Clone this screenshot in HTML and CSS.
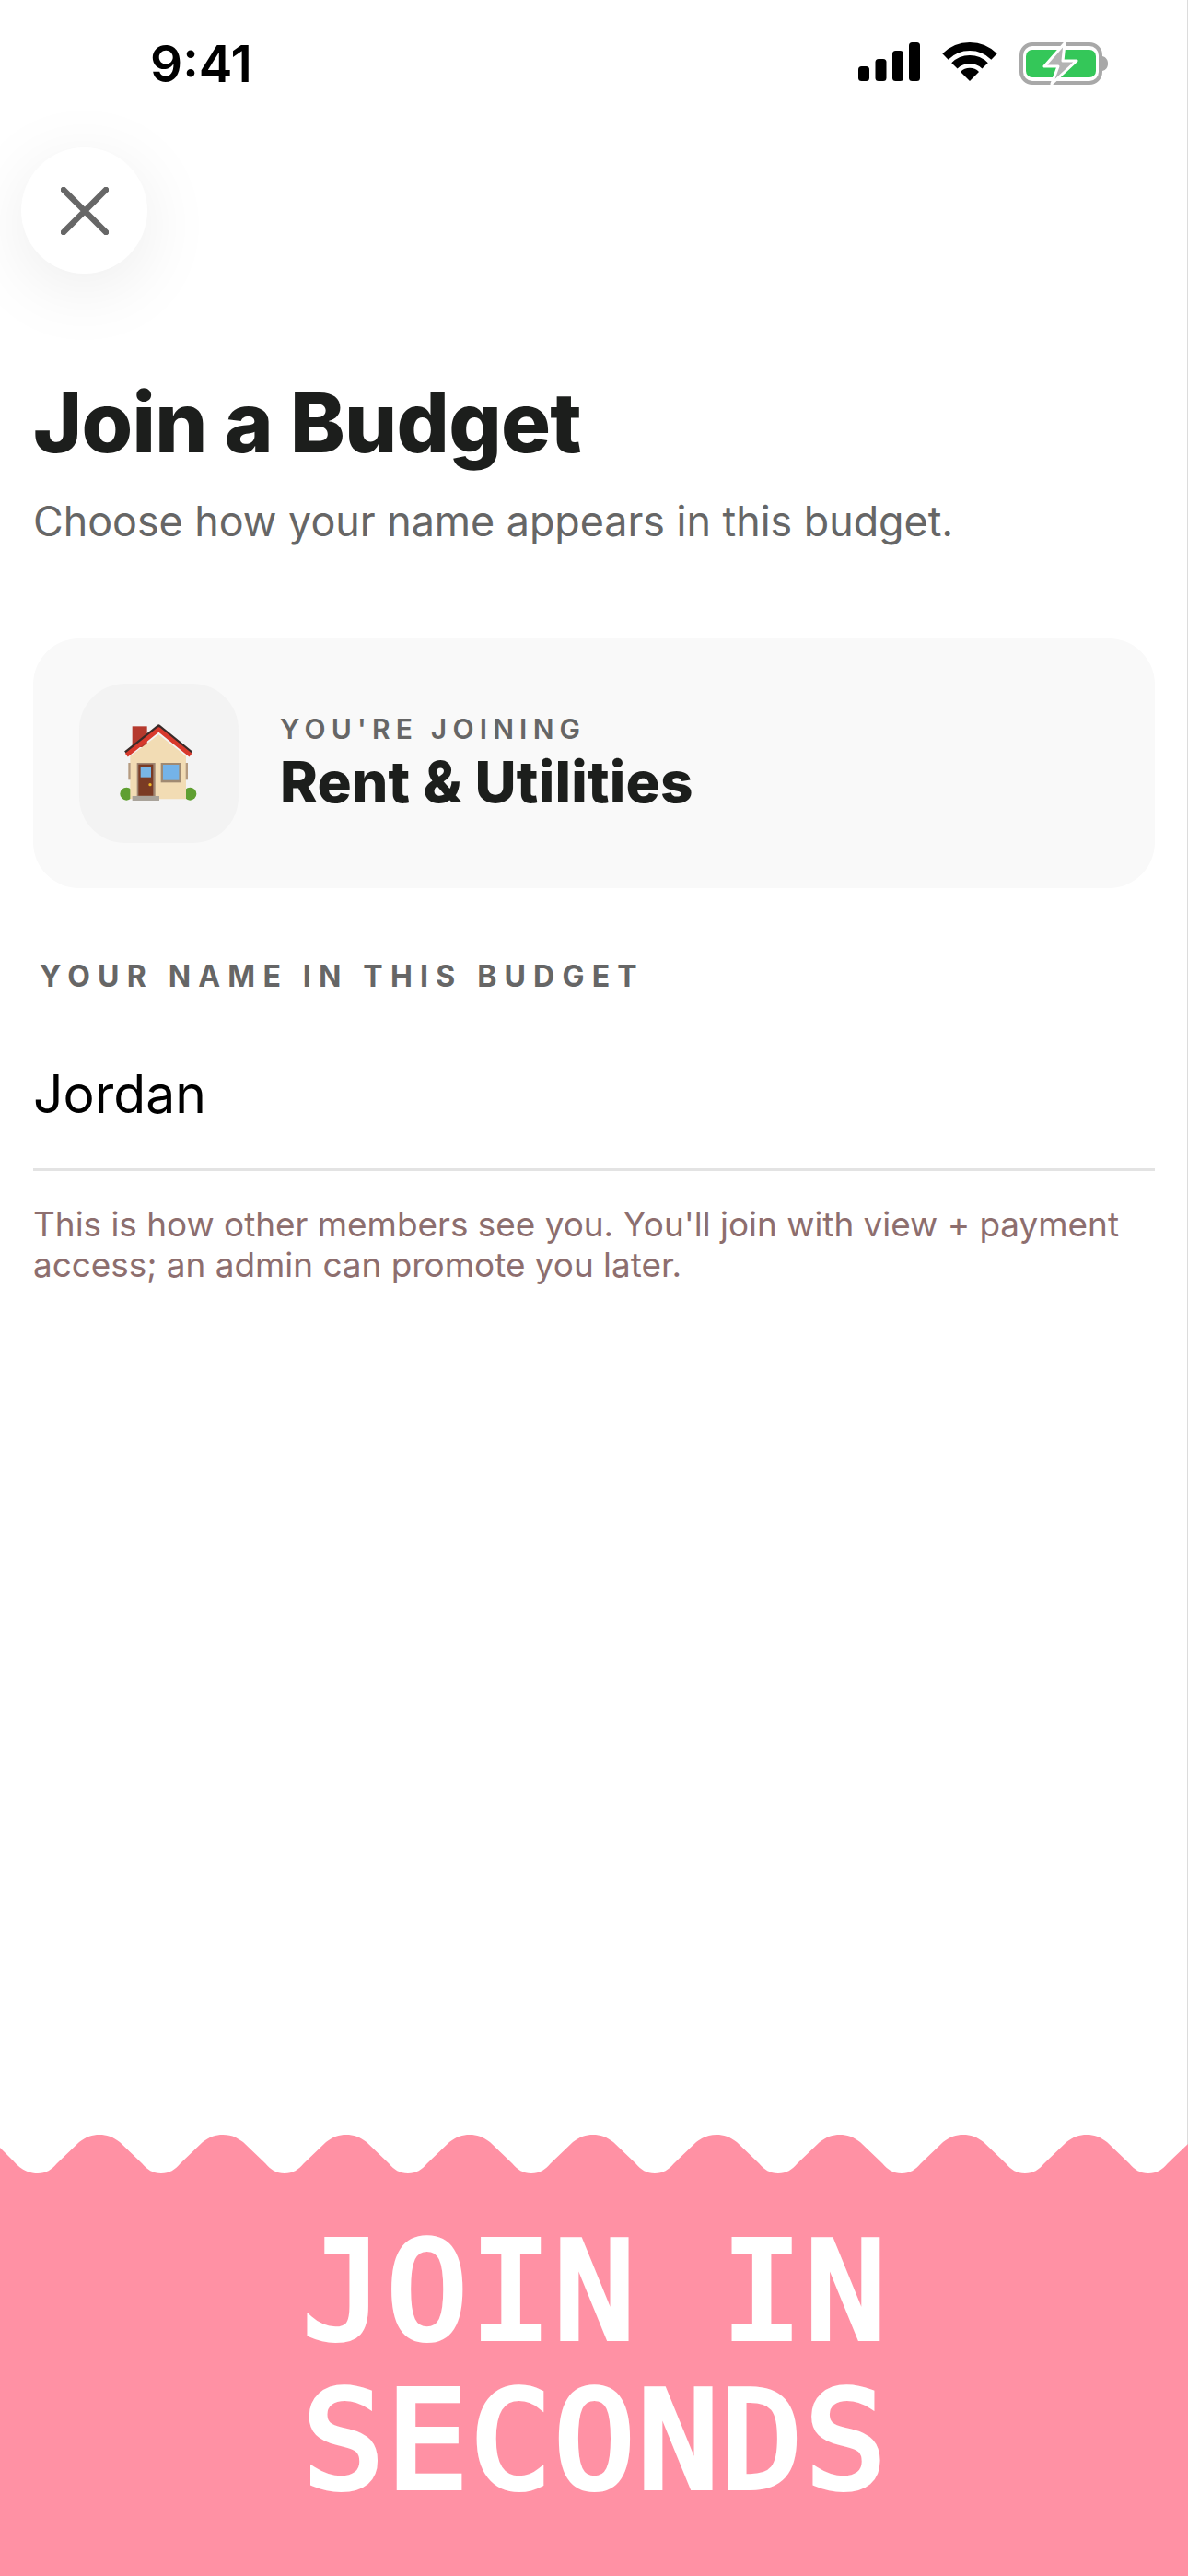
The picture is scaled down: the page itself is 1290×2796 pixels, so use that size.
FILE: index.html
```html
<!DOCTYPE html>
<html lang="en">
<head>
    <meta charset="UTF-8">
    <meta name="viewport" content="width=device-width, initial-scale=1.0">
    <title>Join a Budget</title>
    <link rel="stylesheet" href="styles.css">
</head>
<body>
    <div class="screen">
        <div class="statusBar">
            <span class="time">9:41</span>
            <div class="statusIcons">
                <svg class="signal" width="67" height="42" viewBox="0 0 67 42">
                    <rect x="0" y="26" width="12" height="16" rx="3.5"/>
                    <rect x="18.5" y="18" width="12" height="24" rx="3.5"/>
                    <rect x="37" y="9" width="12" height="33" rx="3.5"/>
                    <rect x="55" y="0" width="12" height="42" rx="3.5"/>
                </svg>
                <svg class="wifi" width="60" height="42" viewBox="0 0 60 42">
                    <path d="M3.5 15.5A37.5 37.5 0 0 1 56.5 15.5" fill="none" stroke="#000" stroke-width="9"/>
                    <path d="M13.4 25.4A23.5 23.5 0 0 1 46.6 25.4" fill="none" stroke="#000" stroke-width="9"/>
                    <path d="M30 42L20 32A14 14 0 0 1 40 32Z"/>
                </svg>
                <svg class="battery" width="96" height="46" viewBox="0 0 96 46">
                    <rect x="2" y="2" width="86" height="42" rx="12" fill="none" stroke="#a8a8a8" stroke-width="4"/>
                    <rect x="7" y="8" width="76" height="30" rx="7" fill="#34c759"/>
                    <path d="M90 15C94 16 96 19 96 23C96 27 94 30 90 31Z" fill="#a8a8a8"/>
                    <path d="M49 1L27 26H42L35 45L62 20H47Z" fill="#b3b3b3" stroke="#fff" stroke-width="3" stroke-linejoin="round"/>
                </svg>
            </div>
        </div>

        <button class="closeButton" aria-label="Close">
            <svg width="52" height="52" viewBox="0 0 52 52">
                <path d="M3 3L49 49M49 3L3 49" stroke="#666" stroke-width="6.5" stroke-linecap="round"/>
            </svg>
        </button>

        <div class="content">
            <h1 class="title">Join a Budget</h1>
            <p class="subtitle">Choose how your name appears in this budget.</p>

            <div class="budgetCard">
                <div class="budgetIcon">
                    <svg width="90" height="90" viewBox="110 105 270 270">
                        <rect x="157" y="118" width="48" height="68" fill="#b5392d"/>
                        <circle cx="138" cy="338" r="21" fill="#5f9f31"/>
                        <circle cx="345" cy="338" r="21" fill="#5f9f31"/>
                        <path d="M150 215L243 145L332 215V355H150Z" fill="#f2dcb4"/>
                        <rect x="144" y="237" width="7" height="55" fill="#b59b80"/>
                        <rect x="331" y="237" width="7" height="55" fill="#b59b80"/>
                        <path d="M135 204L243 118L349 204" fill="none" stroke="#3a2a28" stroke-width="12" stroke-linejoin="round"/>
                        <path d="M138 212L243 128L347 212" fill="none" stroke="#d8392c" stroke-width="14" stroke-linejoin="round"/>
                        <rect x="172" y="237" width="60" height="108" fill="#a08672"/>
                        <rect x="177" y="242" width="48" height="102" fill="#7a3b24"/>
                        <rect x="184" y="250" width="34" height="34" fill="#79b6e6"/>
                        <circle cx="215" cy="308" r="5" fill="#f0b928"/>
                        <rect x="250" y="237" width="66" height="64" fill="#a08a72"/>
                        <rect x="257" y="243" width="52" height="50" fill="#74b3e8"/>
                        <rect x="157" y="345" width="88" height="15" fill="#a9a39a"/>
                    </svg>
                </div>
                <div class="budgetText">
                    <div class="budgetLabel">YOU'RE JOINING</div>
                    <div class="budgetName">Rent &amp; Utilities</div>
                </div>
            </div>

            <div class="fieldLabel">YOUR NAME IN THIS BUDGET</div>
            <div class="nameInput">Jordan</div>
            <p class="helpText">This is how other members see you. You'll join with view + payment access; an admin can promote you later.</p>
        </div>

        <div class="banner">
            <svg class="wave" width="1290" height="44" viewBox="0 0 1290 44" preserveAspectRatio="none">
                <path fill="#ff91a4" d="M0 14 L14 28 C24 40 34 42 41 42 C50 42 56 38 62 31 L86 8 C94 2 100 0 108 0 C116 0 122 2 130 8 L154 31 C160 38 166 42 175 42 C184 42 190 38 196 31 L220 8 C228 2 234 0 242 0 C250 0 256 2 264 8 L288 31 C294 38 300 42 309 42 C318 42 324 38 330 31 L354 8 C362 2 368 0 376 0 C384 0 390 2 398 8 L422 31 C428 38 434 42 443 42 C452 42 458 38 464 31 L488 8 C496 2 502 0 510 0 C518 0 524 2 532 8 L556 31 C562 38 568 42 577 42 C586 42 592 38 598 31 L622 8 C630 2 636 0 644 0 C652 0 658 2 666 8 L690 31 C696 38 702 42 711 42 C720 42 726 38 732 31 L756 8 C764 2 770 0 778 0 C786 0 792 2 800 8 L824 31 C830 38 836 42 845 42 C854 42 860 38 866 31 L890 8 C898 2 904 0 912 0 C920 0 926 2 934 8 L958 31 C964 38 970 42 979 42 C988 42 994 38 1000 31 L1024 8 C1032 2 1038 0 1046 0 C1054 0 1060 2 1068 8 L1092 31 C1098 38 1104 42 1113 42 C1122 42 1128 38 1134 31 L1158 8 C1166 2 1172 0 1180 0 C1188 0 1194 2 1202 8 L1226 31 C1232 38 1238 42 1247 42 C1256 42 1262 38 1268 31 L1290 10 V44 H0Z"/>
            </svg>
            <div class="bannerBody">
                <div class="bannerText">JOIN IN<br>SECONDS</div>
            </div>
        </div>
    </div>
</body>
</html>
```

FILE: styles.css
```css
* {
    box-sizing: border-box;
}
html, body {
    margin: 0;
    padding: 0;
}
body {
    font-family: 'Inter', 'Liberation Sans', sans-serif;
    background: #ffffff;
    color: #1c1e1c;
}
.screen {
    width: 1290px;
    height: 2796px;
    display: flex;
    flex-direction: column;
    border-right: 1px solid #dcdcdc;
}
.statusBar {
    height: 160px;
    display: flex;
    justify-content: space-between;
    align-items: flex-start;
    padding: 36px 86px 0 163px;
}
.time {
    font-size: 55px;
    line-height: 66px;
    font-weight: 600;
    color: #000000;
}
.statusIcons {
    display: flex;
    align-items: flex-start;
    gap: 24px;
    padding-top: 10px;
}
.closeButton {
    width: 137px;
    height: 137px;
    margin-left: 23px;
    padding: 0;
    border: none;
    border-radius: 50%;
    background: #ffffff;
    box-shadow: 0 16px 80px rgba(0, 0, 0, 0.08);
    display: flex;
    align-items: center;
    justify-content: center;
    flex-shrink: 0;
}
.content {
    padding: 0 35px 0 36px;
    flex: 1;
}
.title {
    margin: 107px 0 0;
    font-size: 90px;
    line-height: 110px;
    font-weight: 800;
    letter-spacing: -0.7px;
}
.subtitle {
    margin: 24px 0 0;
    font-size: 44.8px;
    line-height: 56px;
    color: #666666;
}
.budgetCard {
    margin-top: 99px;
    height: 271px;
    padding-left: 50px;
    border-radius: 50px;
    background: #f9f9f9;
    display: flex;
    align-items: center;
    gap: 45px;
}
.budgetIcon {
    width: 173px;
    height: 173px;
    border-radius: 50px;
    background: #f3f3f3;
    display: flex;
    align-items: center;
    justify-content: center;
}
.budgetLabel {
    font-size: 30px;
    line-height: 36px;
    font-weight: 600;
    letter-spacing: 6.2px;
    color: #666666;
}
.budgetName {
    margin-top: 4px;
    font-size: 62px;
    line-height: 72px;
    font-weight: 800;
    letter-spacing: 0.2px;
}
.fieldLabel {
    margin: 76px 0 0 7px;
    font-size: 32px;
    line-height: 40px;
    font-weight: 700;
    letter-spacing: 8.2px;
    color: #666666;
}
.nameInput {
    margin-top: 73px;
    height: 118px;
    font-size: 57px;
    line-height: 70px;
    color: #000000;
    border-bottom: 3px solid #e3e3e3;
}
.helpText {
    margin: 36px 0 0;
    font-size: 36.9px;
    line-height: 44px;
    color: #8d6e6e;
}
.banner {
    flex-shrink: 0;
    margin-right: -1px;
}
.wave {
    display: block;
    margin-bottom: -1px;
}
.bannerBody {
    height: 436px;
    background: #ff91a4;
    padding: 46px 0 0 4px;
}
.bannerText {
    font-family: 'DejaVu Sans Mono', 'Liberation Mono', monospace;
    font-size: 146px;
    line-height: 162px;
    letter-spacing: 3px;
    -webkit-text-stroke: 6px #ffffff;
    color: #ffffff;
    text-align: center;
}
```
